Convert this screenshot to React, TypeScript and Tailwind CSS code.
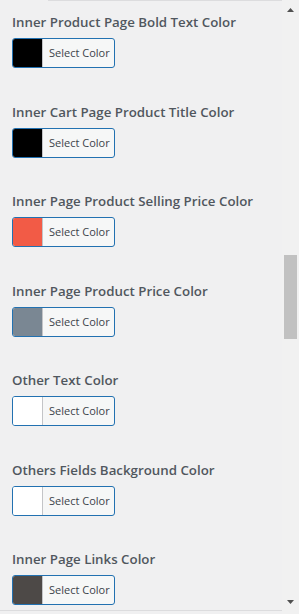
const fields = [
  { label: "Inner Product Page Bold Text Color", color: "#000000" },
  { label: "Inner Cart Page Product Title Color", color: "#000000" },
  { label: "Inner Page Product Selling Price Color", color: "#f25b46" },
  { label: "Inner Page Product Price Color", color: "#7a8793" },
  { label: "Other Text Color", color: "#ffffff" },
  { label: "Others Fields Background Color", color: "#ffffff" },
  { label: "Inner Page Links Color", color: "#4d4947" },
];

function ColorField({ label, color }: { label: string; color: string }) {
  return (
    <div className="h-[89.5px] shrink-0">
      <div className="text-[13.3px] leading-[20px] font-semibold text-[#50575e] whitespace-nowrap">{label}</div>
      <button className="mt-[6px] flex h-[30px] w-[103px] overflow-hidden rounded-[3px] border border-[#2271b1] bg-[#f6f7f7]">
        <span className="h-full w-[30px] shrink-0 border-r border-[#c3c4c7]" style={{ backgroundColor: color }}></span>
        <span className="flex-1 pl-[6px] text-left text-[11px] leading-[28px] text-[#3c434a]">Select Color</span>
      </button>
    </div>
  );
}

export default function App() {
  return (
    <div
      className="relative flex h-[614px] w-[299px] overflow-hidden bg-[#f0f0f1]"
      style={{ fontFamily: '"Open Sans", "Noto Sans", sans-serif' }}
    >
      <div className="absolute left-[48px] right-0 top-0 h-px bg-[#dcdcde]"></div>
      <div className="absolute bottom-[3px] left-0 right-0 h-px bg-[#dcdcde]"></div>
      <div className="flex flex-1 flex-col pl-[12px] pt-[12px]">
        {fields.map((f) => (
          <ColorField key={f.label} {...f} />
        ))}
      </div>
      {/* scrollbar */}
      <div className="relative w-[17px] bg-[#f1f1f1]">
        <svg className="absolute left-[5px] top-[8px]" width="7" height="4" viewBox="0 0 7 4">
          <path d="M3.5 0L7 4H0z" fill="#505050" />
        </svg>
        <div className="absolute left-[2px] top-[255px] h-[84px] w-[13px] bg-[#c1c1c1]"></div>
        <svg className="absolute left-[5px] top-[600px]" width="7" height="4" viewBox="0 0 7 4">
          <path d="M0 0H7L3.5 4z" fill="#505050" />
        </svg>
      </div>
    </div>
  );
}
